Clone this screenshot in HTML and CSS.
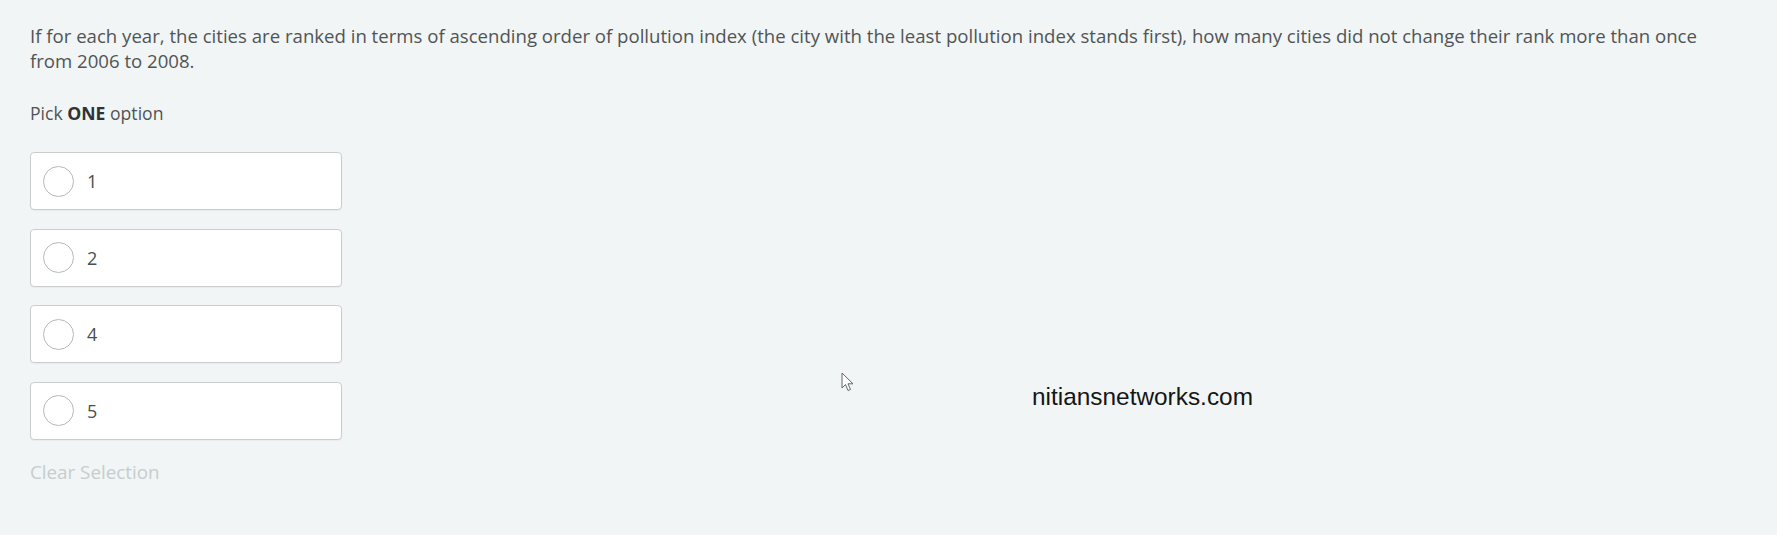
FILE: index.html
```html
<!DOCTYPE html>
<html>
<head>
<meta charset="utf-8">
<link rel="stylesheet" href="styles.css">
</head>
<body>
<main class="page">
  <p class="question">If for each year, the cities are ranked in terms of ascending order of pollution index (the city with the least pollution index stands first), how many cities did not change their rank more than once from 2006 to 2008.</p>
  <p class="pick">Pick <strong>ONE</strong> option</p>
  <div class="options">
    <label class="option"><span class="radio"></span><span class="opt-text">1</span></label>
    <label class="option"><span class="radio"></span><span class="opt-text">2</span></label>
    <label class="option"><span class="radio"></span><span class="opt-text">4</span></label>
    <label class="option"><span class="radio"></span><span class="opt-text">5</span></label>
  </div>
  <div class="clear">Clear Selection</div>
</main>
<div class="watermark">nitiansnetworks.com</div>
<svg class="cursor" width="14" height="21" viewBox="0 0 14 21">
  <path d="M1 1 L1 16 L4.5 12.5 L7 18.5 L9.5 17.5 L7 11.8 L12 11.8 Z" fill="#fff" stroke="#666" stroke-width="1" stroke-linejoin="round"/>
</svg>
</body>
</html>
```
FILE: styles.css
```css
html, body {
  margin: 0;
  padding: 0;
  background: #f1f5f5;
  width: 1777px;
  height: 535px;
  overflow: hidden;
}
.page {
  padding: 23px 0 0 30px;
  font-family: "Open Sans", "Noto Sans", sans-serif;
  color: #505456;
}
.question {
  margin: 0;
  width: 1695px;
  font-size: 18.6px;
  line-height: 25px;
}
.pick {
  margin: 27.5px 0 0;
  font-size: 17.6px;
  line-height: 25px;
}
.pick strong {
  font-weight: 700;
  color: #2f3335;
}
.options {
  margin-top: 26.5px;
  display: flex;
  flex-direction: column;
  gap: 18.67px;
  width: 312px;
}
.option {
  box-sizing: border-box;
  height: 58px;
  background: #fff;
  border: 1px solid #c9cdcd;
  border-radius: 4px;
  display: flex;
  align-items: center;
  padding-left: 12px;
  box-shadow: 0 1px 1px rgba(0,0,0,0.04);
}
.radio {
  box-sizing: border-box;
  width: 31px;
  height: 31px;
  border: 1.5px solid #b5b9ba;
  border-radius: 50%;
  flex: none;
}
.opt-text {
  margin-left: 13px;
  font-size: 18px;
  color: #4a4e50;
}
.clear {
  margin-top: 20.5px;
  font-size: 18.8px;
  line-height: 25px;
  color: #c6cdce;
}
.watermark {
  position: absolute;
  left: 1032px;
  top: 383px;
  font-family: "Liberation Sans", Arial, sans-serif;
  font-size: 24.4px;
  line-height: 28px;
  color: #151515;
}
.cursor {
  position: absolute;
  left: 841px;
  top: 372px;
}
```
